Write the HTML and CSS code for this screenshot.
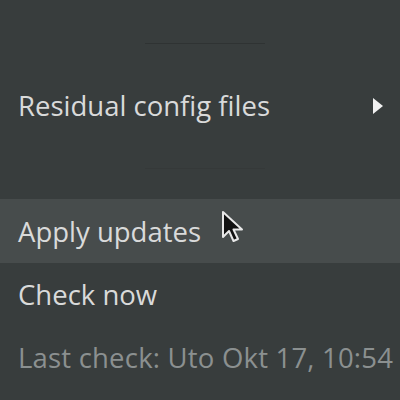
FILE: index.html
```html
<!DOCTYPE html>
<html lang="en">

<head>
    <meta charset="UTF-8">
    <title>Updates menu</title>
    <link rel="stylesheet" href="styles.css">
</head>

<body>
    <div class="menu">
        <div class="separator"><span></span></div>
        <div class="item">
            <span>Residual config files</span>
            <span class="arrow"></span>
        </div>
        <div class="separator faint"><span></span></div>
        <div class="item hover">
            <span>Apply updates</span>
            <svg class="cursor" width="26" height="34" viewBox="0 0 26 34">
                <path d="M2 2 L2 27 L8 21 L12.5 31 L17 29 L12.5 19.5 L21 19.5 Z"
                      fill="#111" stroke="#e8e8e8" stroke-width="2" stroke-linejoin="round" />
            </svg>
        </div>
        <div class="item">
            <span>Check now</span>
        </div>
        <div class="item dim">
            <span>Last check: Uto Okt 17, 10:54</span>
        </div>
    </div>
</body>

</html>
```

FILE: styles.css
```css
body {
    margin: 0;
    background-color: #383d3d;
    font-family: 'Open Sans', sans-serif;
    color: #d9dada;
}

.menu {
    display: flex;
    flex-direction: column;
    padding-top: 12px;
}

.separator {
    height: 62px;
    display: flex;
    align-items: center;
    padding-left: 145px;
}

.separator span {
    width: 120px;
    height: 1px;
    background-color: #2f3333;
}

.separator.faint span {
    background-color: #353939;
}

.item {
    position: relative;
    height: 63px;
    display: flex;
    align-items: center;
    justify-content: space-between;
    padding: 0 17px 0 18px;
    font-size: 27.5px;
    white-space: nowrap;
}

.item.hover {
    height: 64px;
    background-color: #474c4c;
}

.item.dim {
    color: #8b9090;
    letter-spacing: 0.2px;
}

.arrow {
    width: 0;
    height: 0;
    border-top: 8px solid transparent;
    border-bottom: 8px solid transparent;
    border-left: 10px solid #f2f2f2;
}

.cursor {
    position: absolute;
    left: 221px;
    top: 11px;
}
```
